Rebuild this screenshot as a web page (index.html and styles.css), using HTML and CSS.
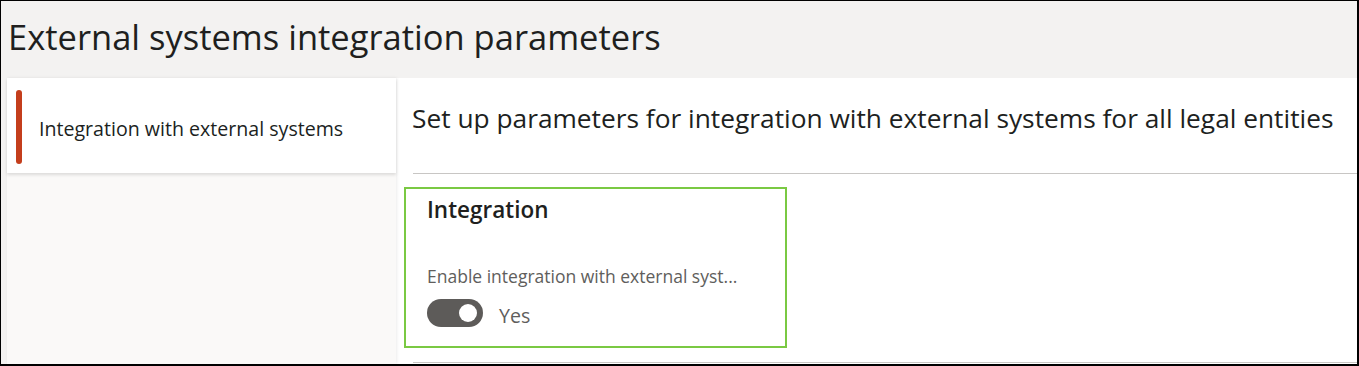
FILE: index.html
```html
<!DOCTYPE html>
<html lang="en">
<head>
<meta charset="utf-8">
<title>External systems integration parameters</title>
<link rel="stylesheet" href="styles.css">
</head>
<body>
<div class="frame">
  <header class="page-header">
    <h1 class="page-title">External systems integration parameters</h1>
  </header>
  <div class="main">
    <nav class="side">
      <div class="nav-card">
        <span class="nav-marker"></span>
        <span class="nav-text">Integration with external systems</span>
      </div>
    </nav>
    <section class="content">
      <h2 class="content-title">Set up parameters for integration with external systems for all legal entities</h2>
      <div class="divider"></div>
      <div class="group">
        <h3 class="group-title">Integration</h3>
        <div class="field-label">Enable integration with external syst...</div>
        <div class="toggle-row">
          <span class="toggle"><span class="knob"></span></span>
          <span class="toggle-text">Yes</span>
        </div>
      </div>
      <div class="divider bottom"></div>
    </section>
  </div>
</div>
</body>
</html>
```
FILE: styles.css
```css
html, body {
  margin: 0;
  padding: 0;
  background: #ffffff;
}
body {
  font-family: "Open Sans", "Noto Sans", sans-serif;
  color: #201f1e;
}
.frame {
  box-sizing: border-box;
  width: 1359px;
  height: 366px;
  border-style: solid;
  border-color: #000;
  border-width: 1px 2px 2px 1px;
  background: #f3f2f1;
  display: flex;
  flex-direction: column;
  overflow: hidden;
}
.page-header {
  height: 77px;
  display: flex;
  align-items: center;
  padding-left: 7px;
  flex: none;
}
.page-title {
  margin: 0;
  font-size: 34.5px;
  font-weight: 400;
  line-height: 44px;
  color: #201f1e;
  padding-bottom: 6px;
  white-space: nowrap;
}
.main {
  flex: 1;
  display: flex;
  min-height: 0;
}
.side {
  width: 389px;
  margin-left: 6px;
  background: #faf9f8;
  box-shadow: 1px 0 3px rgba(0,0,0,0.08);
  flex: none;
  position: relative;
  z-index: 1;
}
.nav-card {
  height: 95px;
  background: #fff;
  display: flex;
  align-items: center;
  box-shadow: 0 2px 3px rgba(0,0,0,0.12);
}
.nav-marker {
  width: 6px;
  height: 74px;
  margin-left: 9px;
  margin-top: 3px;
  background: #c43e1c;
  border-radius: 3px;
  flex: none;
}
.nav-text {
  margin-left: 17px;
  font-size: 19.6px;
  line-height: 26px;
  margin-top: 7px;
  color: #201f1e;
  white-space: nowrap;
}
.content {
  flex: 1;
  min-width: 0;
  background: #fff;
  display: flex;
  flex-direction: column;
}
.content-title {
  margin: 0;
  height: 95px;
  box-sizing: border-box;
  padding: 22px 0 0 16px;
  font-size: 26.3px;
  font-weight: 400;
  line-height: 36px;
  color: #201f1e;
  white-space: nowrap;
}
.divider {
  height: 1px;
  background: #c8c6c4;
  margin-left: 17px;
  flex: none;
}
.group {
  margin: 13px 0 0 8px;
  width: 383px;
  height: 161px;
  box-sizing: border-box;
  border: 2px solid #7ac943;
  padding: 6px 0 0 21px;
}
.group-title {
  margin: 0;
  font-size: 22.5px;
  font-weight: 600;
  line-height: 30px;
  color: #201f1e;
}
.field-label {
  margin-top: 39px;
  font-size: 17.5px;
  line-height: 24px;
  color: #605e5c;
  white-space: nowrap;
}
.toggle-row {
  margin-top: 9px;
  display: flex;
  align-items: center;
}
.toggle {
  width: 56px;
  height: 28px;
  box-sizing: border-box;
  padding: 0 6px;
  border-radius: 14px;
  background: #5d5b59;
  display: flex;
  align-items: center;
  justify-content: flex-end;
  flex: none;
}
.knob {
  width: 18px;
  height: 18px;
  border-radius: 50%;
  background: #fff;
}
.toggle-text {
  margin-left: 16px;
  margin-top: 6px;
  font-size: 19.6px;
  line-height: 26px;
  color: #605e5c;
}
.divider.bottom {
  margin-top: 14px;
}
```
